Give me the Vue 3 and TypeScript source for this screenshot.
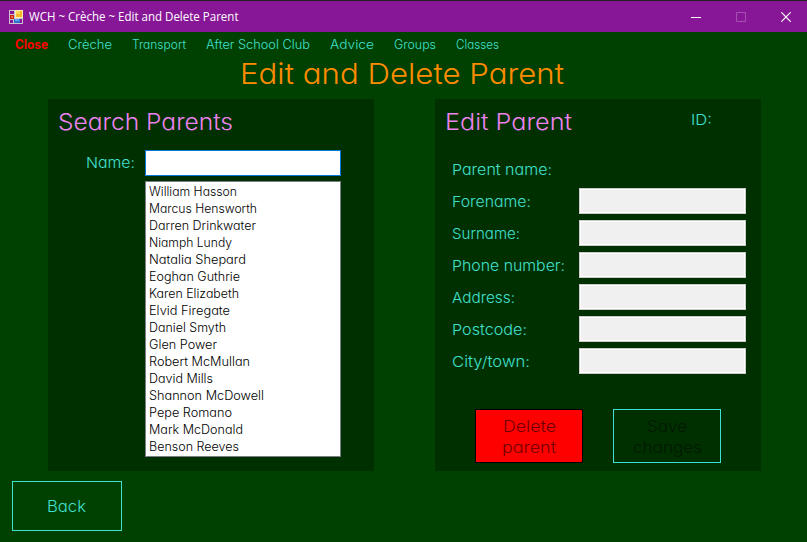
<script setup lang="ts">
import { ref } from 'vue'

interface Entry {
  text: string
  width: number
}

const menu: Entry[] = [
  { text: 'Close', width: 33 },
  { text: 'Crèche', width: 44 },
  { text: 'Transport', width: 54 },
  { text: 'After School Club', width: 104 },
  { text: 'Advice', width: 44 },
  { text: 'Groups', width: 42 },
  { text: 'Classes', width: 43 },
]

const parents: Entry[] = [
  { text: 'William Hasson', width: 88 },
  { text: 'Marcus Hensworth', width: 108 },
  { text: 'Darren Drinkwater', width: 107 },
  { text: 'Niamph Lundy', width: 83 },
  { text: 'Natalia Shepard', width: 97 },
  { text: 'Eoghan Guthrie', width: 91 },
  { text: 'Karen Elizabeth', width: 90 },
  { text: 'Elvid Firegate', width: 81 },
  { text: 'Daniel Smyth', width: 77 },
  { text: 'Glen Power', width: 68 },
  { text: 'Robert McMullan', width: 101 },
  { text: 'David Mills', width: 64 },
  { text: 'Shannon McDowell', width: 115 },
  { text: 'Pepe Romano', width: 83 },
  { text: 'Mark McDonald', width: 94 },
  { text: 'Benson Reeves', width: 90 },
]

const fields: Entry[] = [
  { text: 'Forename:', width: 79 },
  { text: 'Surname:', width: 68 },
  { text: 'Phone number:', width: 113 },
  { text: 'Address:', width: 63 },
  { text: 'Postcode:', width: 75 },
  { text: 'City/town:', width: 78 },
]

const search = ref('')

// Widens (or narrows) a label's letterforms so that it spans the given number of pixels.
const vFit = {
  mounted(el: HTMLElement, binding: { value: number }) {
    const natural = el.getBoundingClientRect().width
    el.style.transform = `scaleX(${binding.value / natural})`
    el.style.marginRight = `${binding.value - natural}px`
  },
}
</script>

<template>
  <div class="window">
    <header class="titlebar">
      <svg class="app-icon" width="14" height="14" viewBox="0 0 14 14" shape-rendering="crispEdges">
        <rect width="14" height="14" fill="#c9c3cf" />
        <rect x="1" y="1" width="4" height="3" fill="#881798" />
        <rect x="1" y="10" width="3" height="3" fill="#881798" />
        <rect x="11" y="9" width="2" height="4" fill="#881798" />
        <rect x="6" y="0" width="8" height="8" fill="#fff0b0" />
        <rect x="7" y="1" width="6" height="6" fill="#f5b82a" />
        <rect x="7" y="1" width="4" height="3" fill="#ffd75e" />
        <rect x="1" y="5" width="4" height="4" fill="#c8200c" />
        <rect x="2" y="6" width="2" height="2" fill="#ef6a45" />
        <rect x="5" y="9" width="6" height="4" fill="#2f6fd0" />
        <rect x="6" y="9" width="4" height="2" fill="#65a4ee" />
      </svg>
      <span v-fit="209.5" class="caption">WCH ~ Crèche ~ Edit and Delete Parent</span>
      <div class="controls">
        <svg width="10" height="10" viewBox="0 0 10 10"><path d="M0 5.5H10" stroke="#fff" /></svg>
        <svg width="10" height="10" viewBox="0 0 10 10"><path d="M.5 .5H9.5V9.5H.5Z" fill="none" stroke="#a74fb3" /></svg>
        <svg width="10" height="10" viewBox="0 0 10 10"><path d="M.3 .3L9.7 9.7M9.7 .3L.3 9.7" stroke="#fff" stroke-width="1.2" /></svg>
      </div>
    </header>

    <nav class="menu">
      <span v-for="(m, i) in menu" :key="m.text" v-fit="m.width" :class="{ close: i === 0 }">{{ m.text }}</span>
    </nav>

    <h1><span v-fit="324">Edit and Delete Parent</span></h1>

    <main class="panels">
      <section class="panel">
        <h2><span v-fit="175">Search Parents</span></h2>
        <div class="search">
          <label for="name"><span v-fit="49">Name:</span></label>
          <input id="name" v-model="search" class="name-input" />
          <ul class="list">
            <li v-for="p in parents" :key="p.text"><span v-fit="p.width">{{ p.text }}</span></li>
          </ul>
        </div>
      </section>

      <section class="panel">
        <div class="edit-head">
          <h2><span v-fit="127">Edit Parent</span></h2>
          <span class="id"><span v-fit="21">ID:</span></span>
        </div>
        <div class="fields">
          <div class="row"><label><span v-fit="100">Parent name:</span></label></div>
          <div v-for="f in fields" :key="f.text" class="row">
            <label><span v-fit="f.width">{{ f.text }}</span></label>
            <input class="field" disabled />
          </div>
        </div>
        <div class="actions">
          <button class="delete" disabled><span v-fit="53">Delete</span><span v-fit="54">parent</span></button>
          <button class="save" disabled><span v-fit="40">Save</span><span v-fit="69">changes</span></button>
        </div>
      </section>
    </main>

    <button class="back"><span v-fit="39">Back</span></button>
  </div>
</template>

<style>
body {
  margin: 0;
  background: #004000;
}
</style>

<style scoped>
* {
  box-sizing: border-box;
}

.window {
  width: 807px;
  height: 542px;
  overflow: hidden;
  background: #004000;
  color: #40e0d0;
  font-family: Inter, 'Liberation Sans', sans-serif;
  font-weight: 300;
  font-feature-settings: 'cv11';
  white-space: nowrap;
}

span {
  display: inline-block;
  transform-origin: 0 50%;
}

.titlebar {
  display: flex;
  align-items: center;
  height: 32px;
  padding: 1px 16px 0 9px;
  border-top: 1px solid #242124;
  background: #881798;
  color: #fff;
}

.caption {
  margin-left: 6px;
  font: 400 12px/16px 'Open Sans', 'Noto Sans', sans-serif;
}

.controls {
  display: flex;
  gap: 35px;
  margin-left: auto;
}

.controls svg,
.app-icon {
  display: block;
}

.menu {
  display: flex;
  gap: 20px;
  height: 24px;
  padding-left: 15px;
  font-size: 12.5px;
  font-weight: 300;
  line-height: 26px;
}

.menu .close {
  color: #f00;
  font-weight: 700;
}

h1,
h2 {
  margin: 0;
  font-weight: 300;
}

h1 {
  height: 43px;
  padding-left: 240px;
  color: #ff8c00;
  font-size: 29px;
  line-height: 35px;
}

.panels {
  display: flex;
  gap: 61px;
  padding-left: 48px;
}

.panel {
  width: 326px;
  height: 372px;
  background: #003000;
}

h2 {
  height: 51px;
  padding-left: 9.5px;
  color: #ee82ee;
  font-size: 23px;
  line-height: 47px;
}

label {
  font-size: 15px;
  line-height: 28px;
}

.search {
  display: grid;
  grid-template-columns: 97px 196px;
  grid-template-rows: 26px 276px;
  row-gap: 5px;
}

.search label {
  padding-left: 38px;
  line-height: 26px;
}

input {
  display: block;
  height: 26px;
  margin: 0;
  padding: 0 3px;
  border-radius: 0;
  outline: none;
}

.name-input {
  width: 196px;
  border: 1px solid #0078d7;
  background: #fff;
  font: 300 15px Inter, sans-serif;
}

.list {
  grid-column: 2;
  height: 276px;
  margin: 0;
  padding: 1px 3px;
  border: 1px solid #7a7f85;
  background: #fff;
  color: #000;
  font-size: 12.5px;
  font-weight: 300;
  line-height: 18px;
  list-style: none;
}

.list li {
  height: 17px;
}

.edit-head {
  display: flex;
  height: 57px;
}

.edit-head h2 {
  width: 256px;
}

.id {
  font-size: 15px;
  line-height: 41px;
}

.fields {
  display: grid;
  gap: 6px;
}

.row {
  display: flex;
  height: 26px;
  padding-left: 16.5px;
}

.row label {
  width: 127.5px;
}

.field {
  width: 167px;
  border: 1px solid #ccc;
  background: #f0f0f0;
  box-shadow: inset 0 0 0 1px #fff;
}

button {
  display: flex;
  flex-direction: column;
  align-items: center;
  justify-content: center;
  padding: 0;
  border: 1px solid #40e0d0;
  border-radius: 0;
  background: transparent;
  font: 300 16.5px/21px Inter, sans-serif;
  font-feature-settings: 'cv11';
}

.actions {
  display: flex;
  gap: 30px;
  padding: 35px 0 0 40px;
}

.actions button {
  width: 108px;
  height: 54px;
  padding-top: 2px;
}

.actions .delete {
  border-color: #000;
  background: #f00;
  color: #700000;
}

.actions .save {
  color: #001800;
}

.back {
  width: 110px;
  height: 50px;
  margin: 10px 0 0 12px;
  padding-right: 2px;
  color: #40e0d0;
}
</style>
